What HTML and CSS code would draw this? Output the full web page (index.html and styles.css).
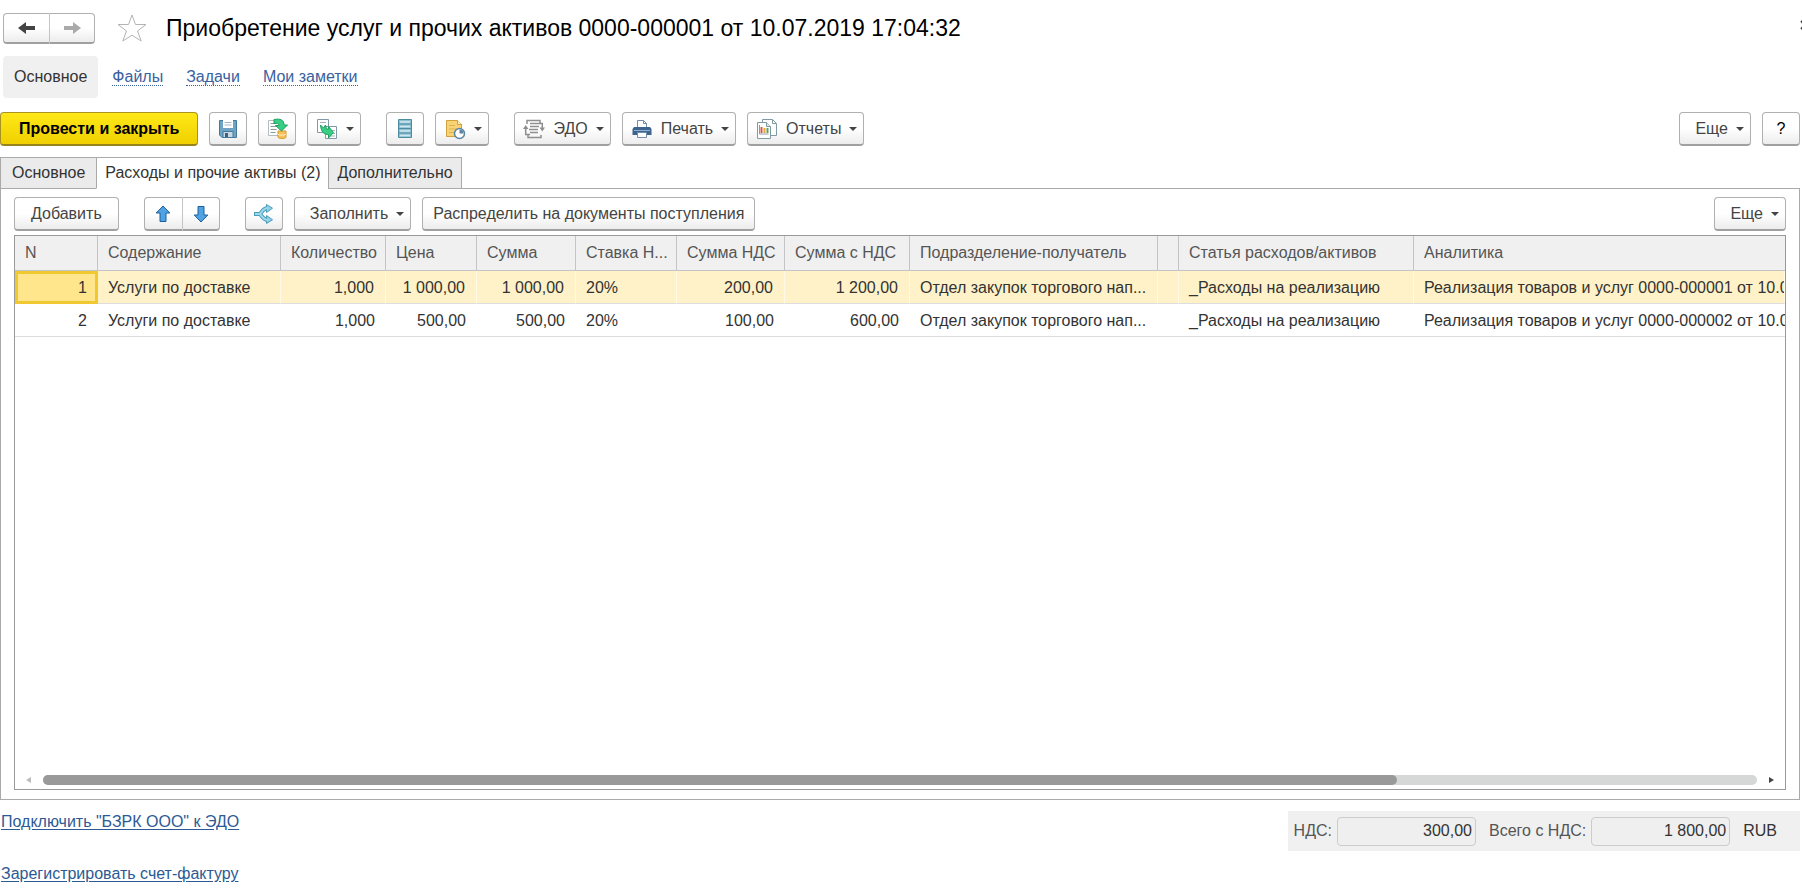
FILE: index.html
```html
<!DOCTYPE html>
<html lang="ru">
<head>
<meta charset="utf-8">
<title>Приобретение услуг и прочих активов</title>
<link rel="stylesheet" href="styles.css">
</head>
<body>
<header class="titlebar">
  <div class="btn-group">
    <button class="btn nav-btn" aria-label="Назад"><svg width="18" height="14" viewBox="0 0 18 14"><path d="M0 7 8 1v4h9v4H8v4z" fill="#444"/></svg></button>
    <button class="btn nav-btn" aria-label="Вперед"><svg width="18" height="14" viewBox="0 0 18 14"><path d="M18 7l-8-6v4H1v4h9v4z" fill="#aaa"/></svg></button>
  </div>
  <button class="star" aria-label="В избранное"><svg width="30" height="28" viewBox="0 0 30 28"><path d="M15 1l3.500 9.500H29l-8.500 6.500 3.700 10L15 21.200 5.800 27l3.700-10L1 10.500h10.500z" fill="#fff" stroke="#b4b4b4"/></svg></button>
  <h1 class="title">Приобретение услуг и прочих активов 0000-000001 от 10.07.2019 17:04:32</h1>
  <button class="close" aria-label="Закрыть"><svg width="10" height="10" viewBox="0 0 10 10"><path d="M1 1l8 8M9 1l-8 8" stroke="#444" stroke-width="2"/></svg></button>
</header>

<nav class="sections">
  <span class="section-current">Основное</span>
  <a class="section-link" href="#">Файлы</a>
  <a class="section-link" href="#">Задачи</a>
  <a class="section-link" href="#">Мои заметки</a>
</nav>

<div class="toolbar">
  <button class="btn btn-primary">Провести и закрыть</button>
  <button class="btn btn-icon" aria-label="Записать"><svg width="20" height="20" viewBox="0 0 20 20"><path d="M1.500 1.500h17v17H4l-2.500-2.500z" fill="#6fa3c4" stroke="#46789b"/><path d="M5 1h10v8H5z" fill="#fff"/><path d="M6.500 3.500h7M6.500 6h7" stroke="#9fb6c4"/><path d="M5 12.500h10v6H5z" fill="#c9d8e2" stroke="#46789b"/><path d="M7 14h3v4H7z" fill="#3c5f7c"/></svg></button>
  <button class="btn btn-icon" aria-label="Провести"><svg width="22" height="22" viewBox="0 0 22 22"><path d="M2.500 2.500h13v15h-13z" fill="#fff" stroke="#b3bcc1"/><path d="M4.500 5.500h5M4.500 8.500h6M4.500 11.500h6M4.500 14.500h5" stroke="#8d999f"/><path d="M12 13h8v6c0 2-8 2-8 0z" fill="#f7c25b" stroke="#d9982b"/><path d="M12 16c0 1.500 8 1.500 8 0" fill="none" stroke="#fff3cf"/><path d="M8 1.500c6-1 10 0 10 5.500h3.500L15.500 13 9.500 7.500H13c0-2-2-2.500-5-2z" fill="#37cf83" stroke="#1f9f5f"/></svg></button>
  <button class="btn btn-menu" aria-label="Создать на основании"><svg width="22" height="22" viewBox="0 0 22 22"><path d="M1.500 1.500h11v13h-11zM9.500 8.500h11v12h-11z" fill="#fff" stroke="#7f9aa6"/><path d="M4 4.500h6M16 12.500h3M16 15.500h3M13 18h6" stroke="#a5b3ba"/><path d="M4.500 7l3 3 2-3 1 4h2V8.500l5 6-5 5.500v-3.500C8 16.500 5 14 4.500 7z" fill="#37cf83" stroke="#1f9f5f"/></svg><i class="caret"></i></button>
  <button class="btn btn-icon gap-before" aria-label="Реестр"><svg width="14" height="19" viewBox="0 0 14 19"><path d="M.5.500h13v18H.5z" fill="#8cc0d2" stroke="#4e8aa0"/><path d="M1 5h12M1 9.500h12M1 14h12" stroke="#4e8aa0"/><path d="M2 3h10M2 7.500h10M2 12h10M2 16.500h10" stroke="#cfe8f0" stroke-width="1.500"/></svg></button>
  <button class="btn btn-menu" aria-label="Напоминания"><svg width="22" height="22" viewBox="0 0 22 22"><path d="M2.500 2.500h11l4 4v12h-15z" fill="#f8d376" stroke="#d0a13c"/><path d="M13.500 2.500v4h4" fill="#fff0c0" stroke="#d0a13c"/><path d="M5 7.500h6M5 11h9M5 14.500h5" stroke="#dcb055"/><circle cx="15.500" cy="15.500" r="5" fill="#fff" stroke="#5a86a3" stroke-width="1.500"/><path d="M15.500 15.500v-4a4 4 0 0 1 4 4z" fill="#5a86a3"/></svg><i class="caret"></i></button>
  <button class="btn btn-menu gap-before"><svg width="22" height="22" viewBox="0 0 22 22"><path d="M4 6V2.500h13V6M5 16v3.500h13V17" fill="none" stroke="#8f8f8f" stroke-width="1.500"/><path d="M7 5.500h8M7 8.500h9M6 11.500h9M7 14.500h8" stroke="#8f8f8f" stroke-width="1.500"/><path d="M7 16.500H2.700V10M15 5.500h4.300V11" fill="none" stroke="#8f8f8f" stroke-width="1.500"/><path d="M0 11l2.700-4 2.800 4zM16.500 9.500H22L19.300 13.500z" fill="#8f8f8f"/></svg><span class="label">ЭДО</span><i class="caret"></i></button>
  <button class="btn btn-menu"><svg width="22" height="22" viewBox="0 0 22 22"><path d="M6.500 10V2.500h6l3 3V10" fill="#fff" stroke="#6f8cad"/><path d="M12.500 2.500v3h3" fill="none" stroke="#6f8cad"/><path d="M3 9h16l1.500 2v6h-19v-6z" fill="#3d648f"/><path d="M3 12.500h16" stroke="#8fb0d0"/><path d="M6.500 14.500h9v5h-9z" fill="#fff" stroke="#6f8cad"/></svg><span class="label">Печать</span><i class="caret"></i></button>
  <button class="btn btn-menu"><svg width="22" height="22" viewBox="0 0 22 22"><path d="M6.500 1.500h10l4 4v12h-14z" fill="#fff" stroke="#7f9aa0"/><path d="M16.500 1.500v4h4" fill="none" stroke="#7f9aa0"/><path d="M1.500 4.500h9l4 4v12h-13z" fill="#fff" stroke="#7f9aa0"/><path d="M10.500 4.500v4h4" fill="#dfe8ea" stroke="#7f9aa0"/><path d="M3.500 7v9h9" fill="none" stroke="#8d999f"/><path d="M5.500 9v6" stroke="#d25b4a" stroke-width="2"/><path d="M8.500 10v5" stroke="#e8a838" stroke-width="2"/><path d="M11.500 10v5" stroke="#5da45b" stroke-width="2"/></svg><span class="label">Отчеты</span><i class="caret"></i></button>
  <button class="btn btn-more push-right"><span>Еще</span><i class="caret"></i></button>
  <button class="btn btn-icon btn-help">?</button>
</div>

<div class="tabs" role="tablist">
  <button class="tab" role="tab">Основное</button>
  <button class="tab tab-active" role="tab" aria-selected="true">Расходы и прочие активы (2)</button>
  <button class="tab" role="tab">Дополнительно</button>
</div>

<main class="panel">
  <div class="toolbar toolbar-inner">
    <button class="btn btn-text">Добавить</button>
    <div class="btn-group gap-before">
      <button class="btn btn-icon" aria-label="Вверх"><svg width="16" height="18" viewBox="0 0 16 18"><path d="M8 1l6.800 7H11v8.500H5V8H1.200z" fill="#4fa3e3" stroke="#1d5f9e"/></svg></button>
      <button class="btn btn-icon" aria-label="Вниз"><svg width="16" height="18" viewBox="0 0 16 18"><path d="M8 17l6.800-7H11V1.500H5V10H1.200z" fill="#4fa3e3" stroke="#1d5f9e"/></svg></button>
    </div>
    <button class="btn btn-icon gap-before" aria-label="Разбить строку"><svg width="20" height="20" viewBox="0 0 20 20"><path d="M0 10h6M14 4C9 4 8 8 6 10c2 2 3 6 8 6" fill="none" stroke="#4b9cbc" stroke-width="4"/><path d="M12.500.5l6 3.700-6 4.300zM12.500 11.500l6 4.300-6 3.700z" fill="#8fd0e6" stroke="#4b9cbc"/><path d="M1 10h5M14 4C9 4 8 8 6 10c2 2 3 6 8 6" fill="none" stroke="#9bd8ea" stroke-width="2"/></svg></button>
    <button class="btn btn-more"><span>Заполнить</span><i class="caret"></i></button>
    <button class="btn btn-wide">Распределить на документы поступления</button>
    <button class="btn btn-more push-right"><span>Еще</span><i class="caret"></i></button>
  </div>

  <div class="grid-box">
    <div class="grid-view">
      <table class="grid">
        <colgroup><col class="c-n"><col class="c-name"><col class="c-qty"><col class="c-price"><col class="c-sum"><col class="c-rate"><col class="c-vat"><col class="c-total"><col class="c-dept"><col class="c-flag"><col class="c-item"><col></colgroup>
        <thead>
          <tr><th>N</th><th>Содержание</th><th class="tight">Количество</th><th>Цена</th><th>Сумма</th><th class="tight">Ставка Н...</th><th class="tight">Сумма НДС</th><th>Сумма с НДС</th><th>Подразделение-получатель</th><th></th><th>Статья расходов/активов</th><th>Аналитика</th></tr>
        </thead>
        <tbody>
          <tr class="selected"><td class="num current">1</td><td>Услуги по доставке</td><td class="num">1,000</td><td class="num">1 000,00</td><td class="num">1 000,00</td><td>20%</td><td class="num">200,00</td><td class="num">1 200,00</td><td class="tight">Отдел закупок торгового нап...</td><td></td><td>_Расходы на реализацию</td><td class="clip">Реализация товаров и услуг 0000-000001 от 10.07</td></tr>
          <tr><td class="num">2</td><td>Услуги по доставке</td><td class="num">1,000</td><td class="num">500,00</td><td class="num">500,00</td><td>20%</td><td class="num">100,00</td><td class="num">600,00</td><td class="tight">Отдел закупок торгового нап...</td><td></td><td>_Расходы на реализацию</td><td class="clip">Реализация товаров и услуг 0000-000002 от 10.07</td></tr>
        </tbody>
      </table>
    </div>
    <div class="scroll">
      <i class="scroll-left"></i>
      <div class="track"><div class="thumb"></div></div>
      <i class="scroll-right"></i>
    </div>
  </div>
</main>

<footer class="footer">
  <div class="links">
    <a href="#">Подключить "БЗРК ООО" к ЭДО</a>
    <a href="#">Зарегистрировать счет-фактуру</a>
  </div>
  <div class="totals">
    <label for="vat">НДС:</label>
    <input id="vat" class="total" value="300,00" readonly>
    <label for="all">Всего с НДС:</label>
    <input id="all" class="total" value="1 800,00" readonly>
    <span class="currency">RUB</span>
  </div>
</footer>
</body>
</html>
```

FILE: styles.css
```css
* { box-sizing: border-box; }
body {
  margin: 0;
  min-height: 100vh;
  display: flex;
  flex-direction: column;
  background: #fff;
  color: #333;
  font: 16px/20px "Liberation Sans", Arial, sans-serif;
  overflow-x: hidden;
}
button, input { font: inherit; }
svg { display: block; flex: none; }

.titlebar { display: flex; align-items: center; height: 56px; padding-left: 3px; }
.title { margin: 0 0 0 19px; font-size: 23px; line-height: 28px; font-weight: normal; color: #000; white-space: nowrap; }
.star { margin-left: 22px; padding: 0; border: 0; background: none; }
.close { margin: 0 -8px 6px auto; padding: 0; border: 0; background: none; }

.btn {
  display: flex;
  align-items: center;
  justify-content: center;
  height: 34px;
  padding: 0;
  border: 1px solid #b0b0b0;
  border-bottom: 2px solid #a0a0a0;
  border-radius: 4px;
  background: linear-gradient(#fff 50%, #ececec);
  color: #444;
  white-space: nowrap;
}
.btn-group { display: flex; }
.btn-group .btn:first-child { border-radius: 4px 0 0 4px; border-right: 0; }
.btn-group .btn:last-child { border-radius: 0 4px 4px 0; border-left-color: #c4c4c4; }
.nav-btn { width: 46px; height: 31px; }
.btn-icon { width: 38px; }
.btn-text { padding: 0 16px; }
.btn-wide { padding: 0 10px; }
.btn-menu { padding: 0 6px 0 8px; }
.btn-menu .label { margin-left: 8px; }
.btn-more { padding: 0 6px 0 15px; }
.btn-help { color: #000; }
.btn-primary {
  padding: 0 18px;
  border-color: #a89320;
  border-bottom-color: #98841c;
  background: linear-gradient(#ffe817, #f0d000);
  color: #000;
  font-weight: bold;
}
.caret { margin-left: 8px; border: 4px solid transparent; border-top-color: #444; border-bottom: 0; }

.sections { display: flex; align-items: center; height: 42px; padding-left: 3px; }
.section-current { padding: 0 11px; border-radius: 4px; background: #f0f0f0; line-height: 42px; margin-right: 14px; }
.section-link { margin-right: 23px; color: #3a62a0; text-decoration: none; border-bottom: 1px dotted #3a62a0; line-height: 17px; }

.toolbar { display: flex; gap: 11px; padding: 14px 2px 11px 0; }
.gap-before { margin-left: 14px; }
.push-right { margin-left: auto; }

.tabs { display: flex; height: 32px; margin-bottom: -1px; z-index: 1; }
.tab { padding: 0 8px; border: 1px solid #aaa; background: #ebebeb; color: #333; margin-right: -1px; }
.tab:first-child { padding: 0 11px; }
.tab-active { background: #fff; border-bottom-color: #fff; }

.panel { flex: 1; display: flex; flex-direction: column; margin-right: 2px; padding: 0 13px 9px; border: 1px solid #aaa; }
.toolbar-inner { padding: 8px 0 4px; }

.grid-box { flex: 1; display: flex; flex-direction: column; border: 1px solid #999; min-width: 0; }
.grid-view { flex: 1; overflow: hidden; }
.grid { width: 100%; table-layout: fixed; border-collapse: separate; border-spacing: 0; }
.grid th, .grid td { padding: 0 10px; overflow: hidden; text-overflow: ellipsis; white-space: nowrap; text-align: left; font-weight: normal; }
.grid th { height: 35px; background: #f0f0f0; color: #555; border-right: 1px solid #c4c4c4; border-bottom: 1px solid #c4c4c4; }
.grid td { height: 33px; padding-top: 2px; border-bottom: 1px solid #ddd; }
.grid .tight { padding-right: 2px; }
.grid th:last-child, .grid td:last-child { border-right: 0; padding-right: 0; }
.grid td.num { text-align: right; padding-right: 11px; }
.grid td.clip { text-overflow: clip; }
.grid .selected td { background: #fff2c8; border-right: 1px solid #fff9e6; }
.grid .selected td.current { padding-top: 0; background: #ffe68c; border: 3px solid #f0c832; padding-right: 8px; }
.c-n { width: 83px; }
.c-name { width: 183px; }
.c-qty { width: 105px; }
.c-price { width: 91px; }
.c-sum { width: 99px; }
.c-rate { width: 101px; }
.c-vat { width: 108px; }
.c-total { width: 125px; }
.c-dept { width: 248px; }
.c-flag { width: 21px; }
.c-item { width: 235px; }

.scroll { display: flex; align-items: center; gap: 12px; padding: 0 11px 4px; }
.scroll-left, .scroll-right { border: 3px solid transparent; }
.scroll-left { border-right: 5px solid #bbb; border-left: 0; }
.scroll-right { border-left: 5px solid #444; border-right: 0; }
.track { flex: 1; height: 10px; border-radius: 5px; background: #d6d8d8; }
.thumb { width: 79%; height: 10px; border-radius: 5px; background: #999; }

.footer { display: flex; justify-content: space-between; align-items: flex-start; height: 93px; padding: 11px 2px 0 1px; }
.links { display: flex; flex-direction: column; gap: 32px; padding-top: 1px; }
.links a { color: #2c5a94; text-underline-offset: 2px; }
.totals { display: flex; align-items: center; height: 40px; padding: 0 23px 0 6px; background: #f0f0f0; color: #555; }
.total { width: 139px; height: 29px; margin: 0 13px 0 5px; padding: 0 3px; border: 1px solid #ccc; border-radius: 4px; background: #efefef; color: #333; text-align: right; }
.currency { color: #333; }
```
